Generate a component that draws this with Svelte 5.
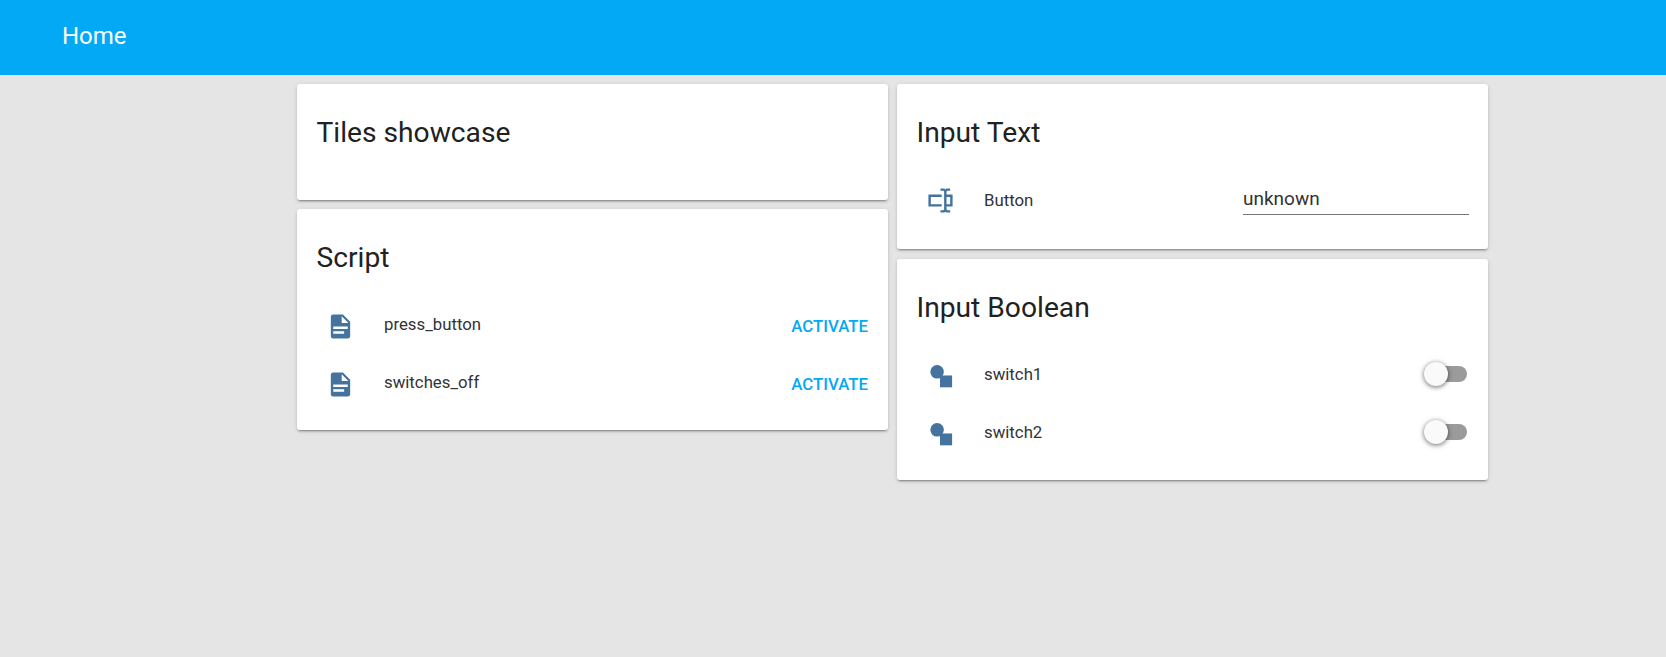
<script>
  const docPath = 'M14,2H6A2,2 0 0,0 4,4V20A2,2 0 0,0 6,22H18A2,2 0 0,0 20,20V8L14,2M15,18H6V16H15V18M18,14H6V12H18V14M13,9V3.5L18.5,9H13Z';
  const textboxPath = 'M17,7H22V17H17V19A1,1 0 0,0 18,20H20V22H17.5C16.95,22 16,21.55 16,21C16,21.55 15.05,22 14.5,22H12V20H14A1,1 0 0,0 15,19V5A1,1 0 0,0 14,4H12V2H14.5C15.05,2 16,2.45 16,3C16,2.45 16.95,2 17.5,2H20V4H18A1,1 0 0,0 17,5V7M2,7H13V9H4V15H13V17H2V7M20,15V9H17V15H20Z';

  const scripts = ['press_button', 'switches_off'];
  const switches = ['switch1', 'switch2'];
</script>

<header class="toolbar">
  <div class="toolbar-title">Home</div>
</header>

<main class="columns">
  <div class="column">
    <section class="card">
      <h2 class="card-title">Tiles showcase</h2>
      <div class="spacer"></div>
    </section>

    <section class="card">
      <h2 class="card-title">Script</h2>
      <div class="rows script-rows">
        {#each scripts as name}
          <div class="row">
            <svg class="icon" viewBox="0 0 24 24"><path d={docPath} /></svg>
            <span class="row-name raised">{name}</span>
            <button class="activate">ACTIVATE</button>
          </div>
        {/each}
      </div>
    </section>
  </div>

  <div class="column">
    <section class="card input-card">
      <h2 class="card-title">Input Text</h2>
      <div class="rows">
        <div class="row tall">
          <svg class="icon" viewBox="0 0 24 24"><path d={textboxPath} /></svg>
          <span class="row-name">Button</span>
          <input class="text-input" value="unknown" />
        </div>
      </div>
    </section>

    <section class="card">
      <h2 class="card-title">Input Boolean</h2>
      <div class="rows">
        {#each switches as name}
          <div class="row">
            <svg class="icon" viewBox="0 0 24 24">
              <circle cx="9.2" cy="9.8" r="5.6" />
              <rect x="11.6" y="12.8" width="10" height="9.8" />
            </svg>
            <span class="row-name">{name}</span>
            <div class="toggle"><div class="knob"></div></div>
          </div>
        {/each}
      </div>
    </section>
  </div>
</main>

<style>
  :global(body) {
    margin: 0;
    background: #e5e5e5;
    font-family: Roboto, "Liberation Sans", sans-serif;
    color: #212121;
  }

  .toolbar {
    height: 75px;
    box-sizing: border-box;
    padding: 0 0 4px 62px;
    background: #03a9f4;
    display: flex;
    align-items: center;
  }
  .toolbar-title { color: #fff; font-size: 24px; }

  .columns {
    display: flex;
    gap: 1px;
    width: 1199px;
    padding: 5px 0 0 293px;
  }
  .column { flex: 1; padding: 0 4px; min-width: 0; }

  .card {
    background: #fff;
    border-radius: 3px;
    margin: 4px 0 9px;
    box-shadow: 0 2px 2px 0 rgba(0,0,0,.14), 0 1px 5px 0 rgba(0,0,0,.12), 0 3px 1px -2px rgba(0,0,0,.2);
  }
  .input-card { margin-bottom: 10px; }
  .card-title {
    margin: 0;
    padding: 30px 19.5px 0;
    height: 46px;
    font-size: 28.2px;
    font-weight: 400;
    line-height: 38px;
    color: #212121;
  }
  .spacer { height: 40px; }

  .rows { padding: 10px 19px 19px 20px; }
  .script-rows { padding-top: 12px; padding-bottom: 17px; }
  .row { display: flex; align-items: center; height: 58px; }
  .row.tall { height: 60px; }

  .icon { width: 29px; height: 29px; margin-left: 8.5px; fill: #44739e; flex: none; }
  .row-name { margin-left: 29.5px; font-size: 16.8px; flex: 1; color: #333; }
  .row-name.raised { padding-bottom: 4px; }

  .activate {
    border: 0;
    background: none;
    padding: 0;
    margin-right: 1px;
    color: #03a9f4;
    font: 500 16.8px Roboto, sans-serif;
  }

  .text-input {
    width: 226px;
    height: 30px;
    box-sizing: border-box;
    border: 0;
    border-bottom: 1px solid #757575;
    outline: 0;
    padding: 2px 0 5px;
    font: 400 19px/22px Roboto, sans-serif;
    color: #333;
  }

  .toggle {
    position: relative;
    width: 37px;
    height: 16px;
    margin-right: 2px;
    border-radius: 8px;
    background: #9b9b9b;
  }
  .knob {
    position: absolute;
    left: -6px;
    top: -4px;
    width: 24px;
    height: 24px;
    border-radius: 50%;
    background: #fafafa;
    box-shadow: 0 1px 5px rgba(0,0,0,.6);
  }
</style>
